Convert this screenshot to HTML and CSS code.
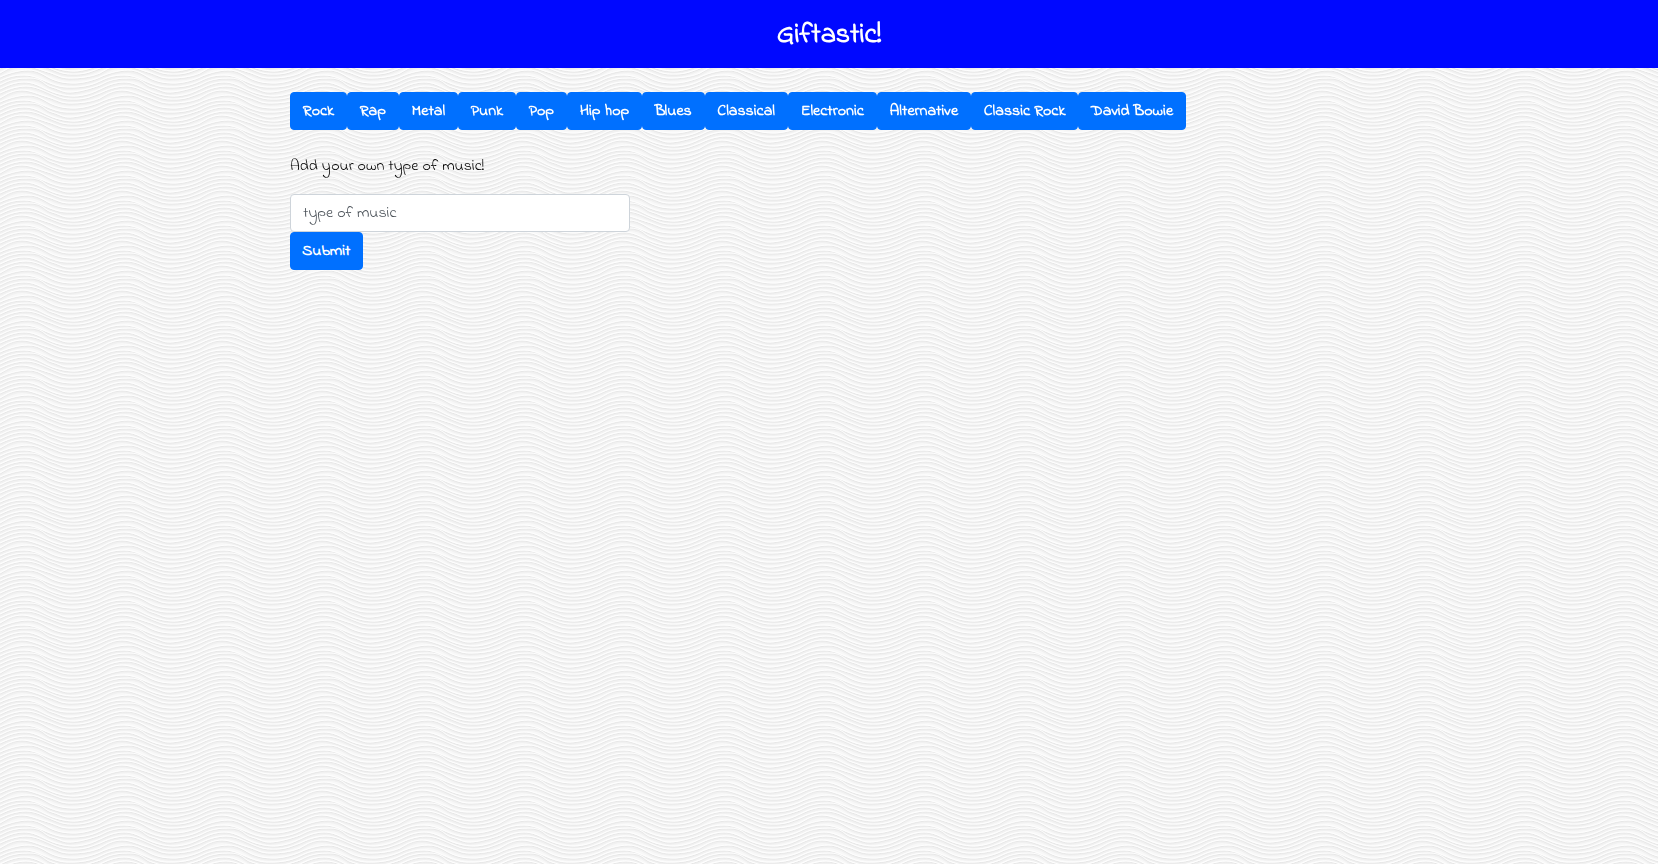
FILE: index.html
```html
<!DOCTYPE html>
<html lang="en">
<head>
<meta charset="utf-8">
<title>Giftastic!</title>
<link rel="stylesheet" href="styles.css">
</head>
<body>
<svg class="backdrop" aria-hidden="true">
  <defs>
    <g id="ridges">
      <path d="M0 7C8 3 14 1 24 1S40 5 50 9S64 13 72 13S90 12 100 7"/>
      <path d="M0 11C6 8 12 4 28 4S42 10 52 13S62 18 70 18S92 14 100 11"/>
      <path d="M0 15C8 11 16 8 24 8S38 11 46 15S64 22 74 22S94 18 100 15"/>
      <path d="M0 19C6 16 16 12 26 12S44 17 54 21S66 25 76 25S92 22 100 19"/>
      <path d="M0 24C8 19 14 16 22 16S38 20 48 23S60 29 70 29S90 28 100 24"/>
      <path d="M0 28C6 25 18 21 28 21S42 25 50 29S66 34 74 34S94 31 100 28"/>
    </g>
    <g id="relief" fill="none">
      <use href="#ridges" y="1" stroke="#f1f1f1" stroke-width="2"/>
      <use href="#ridges" stroke="#e6e6e6"/>
      <use href="#ridges" y="-1" stroke="#fefefe"/>
    </g>
    <pattern id="waves" width="100" height="25" patternUnits="userSpaceOnUse">
      <use href="#relief" y="-25"/>
      <use href="#relief"/>
      <use href="#relief" y="25"/>
    </pattern>
  </defs>
  <rect width="100%" height="100%" fill="url(#waves)"/>
</svg>
<header class="masthead"><h1 class="title">Giftastic!</h1></header>
<main class="container">
  <div class="topics">
    <button class="btn">Rock</button>
    <button class="btn">Rap</button>
    <button class="btn">Metal</button>
    <button class="btn">Punk</button>
    <button class="btn">Pop</button>
    <button class="btn">Hip hop</button>
    <button class="btn">Blues</button>
    <button class="btn">Classical</button>
    <button class="btn">Electronic</button>
    <button class="btn">Alternative</button>
    <button class="btn">Classic Rock</button>
    <button class="btn">David Bowie</button>
  </div>
  <form class="add-form">
    <label class="label" for="music">Add your own type of music!</label>
    <input class="field" id="music" type="text" placeholder="type of music">
    <button class="btn" type="button">Submit</button>
  </form>
</main>
</body>
</html>
```
FILE: styles.css
```css
* { box-sizing: border-box; }
body {
  margin: 0;
  min-height: 100vh;
  background: #f8f8f8;
  color: #212529;
  font: 16px/24px "Indie Flower", Lato, sans-serif;
}
.backdrop {
  position: fixed;
  inset: 0;
  z-index: -1;
  width: 100%;
  height: 100%;
}
.masthead {
  padding: 18px 16px 14px;
  background: #0008ff;
  color: #fff;
  text-align: center;
}
.title { margin: 0; font-size: 28px; line-height: 36px; font-weight: 700; }
.container { max-width: 1110px; margin: 0 auto; padding: 24px 16px; }
.topics { display: flex; flex-wrap: wrap; max-width: 896px; }
.topics .btn { flex: 1 1 auto; padding: 6px 8px; }
.btn {
  padding: 6px 11px;
  border: 1px solid #0070ff;
  border-radius: 4px;
  background: #0070ff;
  color: #fff;
  font: inherit;
  font-weight: 700;
}
.add-form {
  display: flex;
  flex-direction: column;
  align-items: flex-start;
  margin-top: 24px;
}
.label { margin-bottom: 16px; color: #000; }
.field {
  width: 100%;
  max-width: 340px;
  padding: 6px 12px;
  border: 1px solid #ced4da;
  border-radius: 4px;
  background: #fff;
  color: #495057;
  font: inherit;
}
.field::placeholder { color: #495057; opacity: 1; }
```
